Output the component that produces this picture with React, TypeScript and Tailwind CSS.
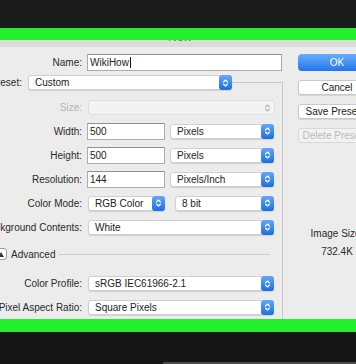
import type { ReactNode } from "react";

function Chevrons({ color = "#ffffff" }: { color?: string }) {
  return (
    <svg width="7" height="10" viewBox="0 0 7 10" fill="none">
      <path d="M1.5 4 L3.5 2 L5.5 4" stroke={color} strokeWidth="1.1" strokeLinecap="round" strokeLinejoin="round" />
      <path d="M1.5 6 L3.5 8 L5.5 6" stroke={color} strokeWidth="1.1" strokeLinecap="round" strokeLinejoin="round" />
    </svg>
  );
}

function Stepper() {
  return (
    <div className="-my-px -mr-px flex h-[15px] w-[13px] shrink-0 items-center justify-center rounded-[3px] bg-linear-to-b from-[#62a8f8] to-[#1c6de4]">
      <Chevrons />
    </div>
  );
}

function Select({ value, className }: { value: string; className: string }) {
  return (
    <div
      className={`flex h-[15px] shrink-0 items-center justify-between rounded-[3px] border border-[#d0d0d0] bg-white pl-[6px] text-[10px] text-[#222] shadow-[0_1px_1px_rgba(0,0,0,0.12)] ${className}`}
    >
      <span className="whitespace-nowrap">{value}</span>
      <Stepper />
    </div>
  );
}

function TextInput({ children, className }: { children: ReactNode; className: string }) {
  return (
    <div
      className={`flex h-[17px] shrink-0 items-center border border-[#ababab] border-t-[#8f8f8f] bg-white pl-[2px] text-[10px] text-[#222] ${className}`}
    >
      {children}
    </div>
  );
}

function Label({ children, muted }: { children: ReactNode; muted?: boolean }) {
  return (
    <div className="flex w-[82px] shrink-0 justify-end">
      <span className={`whitespace-nowrap text-[10px] ${muted ? "text-[#b3b3b3]" : "text-[#2a2a2a]"}`}>{children}</span>
    </div>
  );
}

function Button({ children, variant }: { children: ReactNode; variant: "default" | "plain" | "disabled" }) {
  if (variant === "default") {
    return (
      <div className="mt-[7px] flex h-[17px] w-[78px] items-center justify-center rounded-[4px] bg-linear-to-b from-[#67aefa] to-[#2375ea] text-[10px] text-white">
        {children}
      </div>
    );
  }
  return (
    <div
      className={`mt-[9px] flex h-[15px] w-[78px] items-center justify-center rounded-[3px] border text-[10px] whitespace-nowrap ${
        variant === "plain"
          ? "border-[#c9c9c9] bg-white text-[#222] shadow-[0_1px_1px_rgba(0,0,0,0.1)]"
          : "border-[#d8d8d8] bg-[#f2f2f2] text-[#bababa]"
      }`}
    >
      {children}
    </div>
  );
}

export default function App() {
  return (
    <div className="flex h-[364px] w-[356px] flex-col overflow-hidden bg-[#1a1a1a] font-['Liberation_Sans',Arial,sans-serif]">
      <div className="h-[28px] shrink-0 bg-[#1a1a1a]" />
      <div className="h-[12px] shrink-0 bg-[#21f02b]" />

      <div className="flex h-[279px] shrink-0 flex-col bg-[#ececec]">
        {/* title bar, mostly hidden under the frame */}
        <div className="flex h-[7px] shrink-0 justify-center overflow-hidden bg-[#dcdcdc]">
          <span className="-mt-[9px] ml-[4px] text-[12px] leading-[12px] text-[#777]">New</span>
        </div>

        <div className="flex flex-1">
          <div className="flex w-[283px] shrink-0 flex-col">
            <div className="mt-[7px] flex h-[17px] items-center gap-[5px]">
              <Label>Name:</Label>
              <TextInput className="w-[195px]">
                <span>WikiHow</span>
                <span className="ml-px h-[11px] w-px bg-[#111]" />
              </TextInput>
            </div>

            <div className="mt-[4px] flex h-[15px]">
              <div className="flex w-[22px] shrink-0 items-center justify-end">
                <span className="whitespace-nowrap text-[10px] text-[#2a2a2a]">Preset:</span>
              </div>
              <Select value="Custom" className="ml-[6px] w-[204px]" />
              <div className="h-[8px] flex-1 self-end border-t border-r border-[#c6c6c6]" />
            </div>

            <div className="flex flex-1 flex-col border-r border-[#c6c6c6] pt-[6px]">
              <div className="flex h-[23px] items-center gap-[5px]">
                <Label muted>Size:</Label>
                <div className="ml-px flex h-[15px] w-[187px] items-center justify-end rounded-[3px] border border-[#dedede] bg-[#f3f3f3] pr-[3px]">
                  <Chevrons color="#b5b5b5" />
                </div>
              </div>

              <div className="flex h-[24px] items-center gap-[5px]">
                <Label>Width:</Label>
                <TextInput className="w-[78px]">500</TextInput>
                <Select value="Pixels" className="w-[104px]" />
              </div>

              <div className="flex h-[24px] items-center gap-[5px]">
                <Label>Height:</Label>
                <TextInput className="w-[78px]">500</TextInput>
                <Select value="Pixels" className="w-[104px]" />
              </div>

              <div className="flex h-[24px] items-center gap-[5px]">
                <Label>Resolution:</Label>
                <TextInput className="w-[78px]">144</TextInput>
                <Select value="Pixels/Inch" className="w-[104px]" />
              </div>

              <div className="flex h-[24px] items-center gap-[5px]">
                <Label>Color Mode:</Label>
                <Select value="RGB Color" className="ml-px w-[77px]" />
                <Select value="8 bit" className="ml-[5px] w-[99px]" />
              </div>

              <div className="flex h-[24px] items-center gap-[5px]">
                <Label>Background Contents:</Label>
                <Select value="White" className="ml-px w-[186px]" />
              </div>

              <div className="flex h-[30px] items-center">
                <div className="-ml-[8px] flex h-[12px] w-[15px] shrink-0 items-center justify-center rounded-[3px] border border-[#9c9c9c] bg-white pl-[3px]">
                  <div className="h-0 w-0 border-r-[3px] border-b-[5px] border-l-[3px] border-r-transparent border-b-[#333] border-l-transparent" />
                </div>
                <span className="ml-[4px] text-[10px] text-[#2a2a2a]">Advanced</span>
                <div className="mr-[12px] ml-[4px] h-px flex-1 bg-[#cbcbcb]" />
              </div>

              <div className="mt-[3px] flex h-[23px] items-center gap-[5px]">
                <Label>Color Profile:</Label>
                <Select value="sRGB IEC61966-2.1" className="ml-px w-[186px]" />
              </div>

              <div className="flex h-[24px] items-center gap-[5px]">
                <Label>Pixel Aspect Ratio:</Label>
                <Select value="Square Pixels" className="ml-px w-[186px]" />
              </div>
            </div>
          </div>

          <div className="ml-[15px] flex w-[78px] shrink-0 flex-col">
            <Button variant="default">OK</Button>
            <Button variant="plain">Cancel</Button>
            <Button variant="plain">Save Preset...</Button>
            <Button variant="disabled">Delete Preset...</Button>
            <p className="mt-[85px] h-[12px] text-center text-[10px] leading-[12px] whitespace-nowrap text-[#2a2a2a]">Image Size:</p>
            <p className="mt-[6px] h-[12px] text-center text-[10px] leading-[12px] text-[#2a2a2a]">732.4K</p>
          </div>
        </div>
      </div>

      <div className="h-[13px] shrink-0 bg-[#21f02b]" />
      <div className="flex flex-1 flex-col justify-end bg-[#151515]">
        <div className="ml-[163px] h-[2px] bg-[#4a4a46]" />
      </div>
    </div>
  );
}
